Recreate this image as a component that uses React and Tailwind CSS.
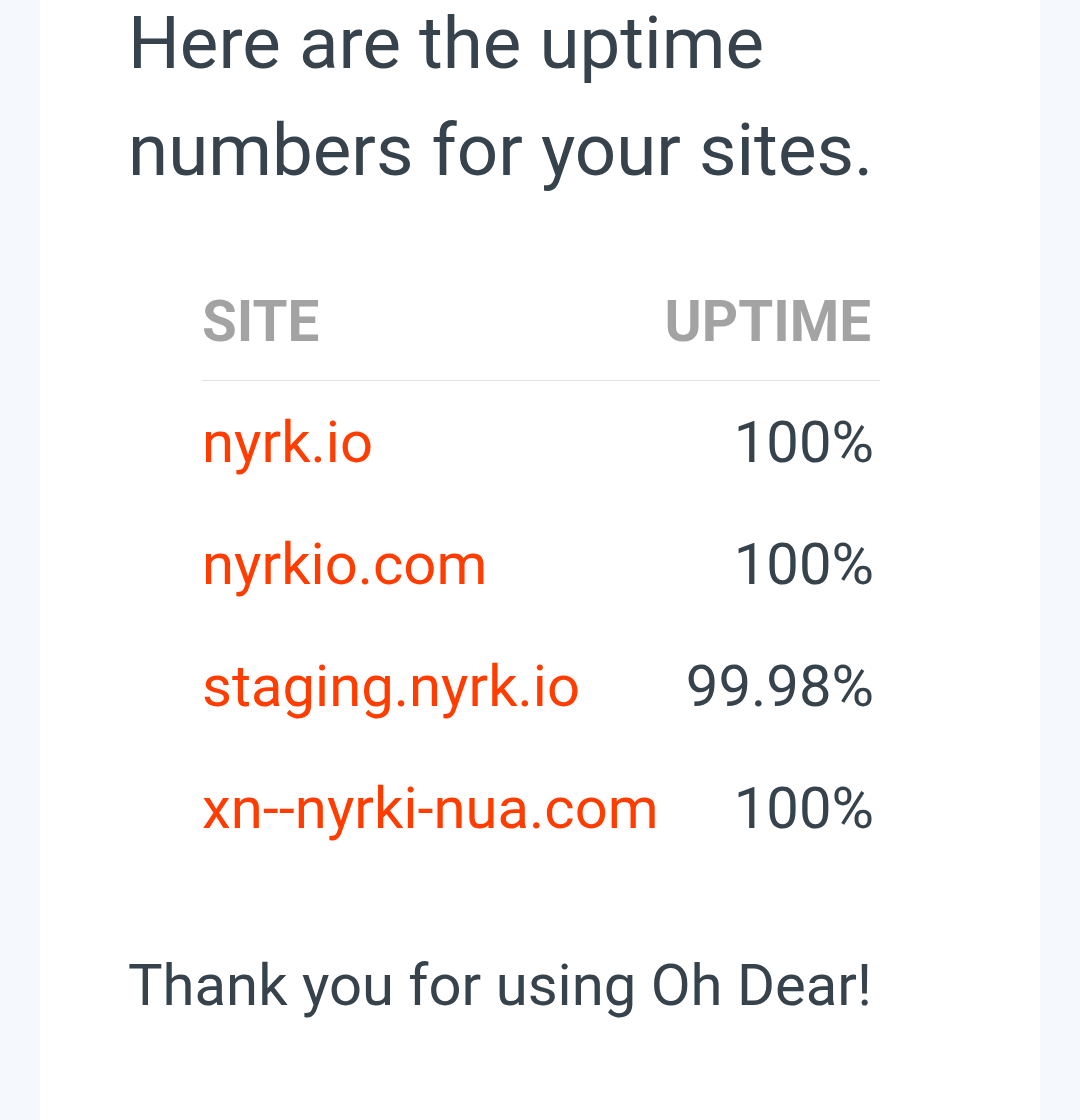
import React from "react";

const rows = [
  { site: "nyrk.io", uptime: "100%" },
  { site: "nyrkio.com", uptime: "100%" },
  { site: "staging.nyrk.io", uptime: "99.98%" },
  { site: "xn--nyrki-nua.com", uptime: "100%" },
];

const App = () => {
  return (
    <div
      className="min-h-[1120px] bg-[#f5f8fc] px-[40px]"
      style={{ fontFamily: "Roboto, 'Noto Sans', sans-serif" }}
    >
      <div className="bg-white min-h-[1120px] px-[88px] overflow-hidden">
        <h1 className="mt-[-10px] text-[72.7px] leading-[107px] font-normal text-[#36434c]">
          Here are the uptime numbers for your sites.
        </h1>

        <table className="mt-[59px] ml-[74px] w-[678px] border-collapse text-[58px] leading-[70px]">
          <thead>
            <tr className="border-b border-[#e3e3e3]">
              <th className="pt-[24px] pb-[23px] text-left text-[56.5px] font-bold text-[#a3a3a3]">SITE</th>
              <th className="pt-[24px] pb-[23px] pr-[9px] text-right text-[56.5px] font-bold text-[#a3a3a3]">UPTIME</th>
            </tr>
          </thead>
          <tbody>
            {rows.map((row) => (
              <tr key={row.site}>
                <td className="py-[26px] text-left">
                  <a href="#" className="text-[#ff3d00]">{row.site}</a>
                </td>
                <td className="py-[26px] pr-[6px] text-right text-[#36434c]">{row.uptime}</td>
              </tr>
            ))}
          </tbody>
        </table>

        <p className="mt-[81px] text-[58px] leading-[70px] text-[#36434c]">
          Thank you for using Oh Dear!
        </p>
      </div>
    </div>
  );
};

export default App;
